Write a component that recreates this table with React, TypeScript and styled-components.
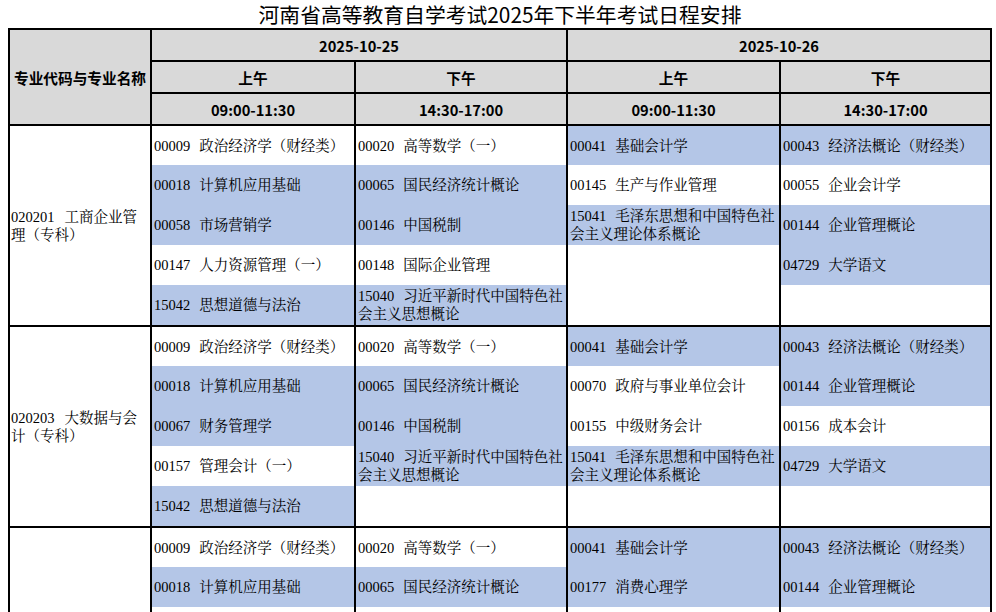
import styled, { createGlobalStyle } from "styled-components";

const GlobalStyle = createGlobalStyle`
  body {
    margin: 0;
    background: #ffffff;
  }
`;

const BLUE = "#b4c6e7";
const GRAY = "#d9d9d9";

type Exam = { code?: string; name?: string; blue: boolean };
type Block = { major: [string, string] | null; rows: Exam[][] };

const x = (code: string, name: string, blue = false): Exam => ({ code, name, blue });
const empty: Exam = { blue: false };

const blocks: Block[] = [
  {
    major: ["020201", "工商企业管理（专科）"],
    rows: [
      [x("00009", "政治经济学（财经类）"), x("00020", "高等数学（一）"), x("00041", "基础会计学", true), x("00043", "经济法概论（财经类）", true)],
      [x("00018", "计算机应用基础", true), x("00065", "国民经济统计概论", true), x("00145", "生产与作业管理"), x("00055", "企业会计学")],
      [x("00058", "市场营销学", true), x("00146", "中国税制", true), x("15041", "毛泽东思想和中国特色社会主义理论体系概论", true), x("00144", "企业管理概论", true)],
      [x("00147", "人力资源管理（一）"), x("00148", "国际企业管理"), empty, x("04729", "大学语文", true)],
      [x("15042", "思想道德与法治", true), x("15040", "习近平新时代中国特色社会主义思想概论", true), empty, empty],
    ],
  },
  {
    major: ["020203", "大数据与会计（专科）"],
    rows: [
      [x("00009", "政治经济学（财经类）"), x("00020", "高等数学（一）"), x("00041", "基础会计学", true), x("00043", "经济法概论（财经类）", true)],
      [x("00018", "计算机应用基础", true), x("00065", "国民经济统计概论", true), x("00070", "政府与事业单位会计"), x("00144", "企业管理概论", true)],
      [x("00067", "财务管理学", true), x("00146", "中国税制", true), x("00155", "中级财务会计"), x("00156", "成本会计")],
      [x("00157", "管理会计（一）"), x("15040", "习近平新时代中国特色社会主义思想概论", true), x("15041", "毛泽东思想和中国特色社会主义理论体系概论", true), x("04729", "大学语文", true)],
      [x("15042", "思想道德与法治", true), empty, empty, empty],
    ],
  },
  {
    major: null,
    rows: [
      [x("00009", "政治经济学（财经类）"), x("00020", "高等数学（一）"), x("00041", "基础会计学", true), x("00043", "经济法概论（财经类）", true)],
      [x("00018", "计算机应用基础", true), x("00065", "国民经济统计概论", true), x("00177", "消费心理学", true), x("00144", "企业管理概论", true)],
      [empty, empty, empty, empty],
      [empty, empty, empty, empty],
      [empty, empty, empty, empty],
    ],
  },
];

const Page = styled.div`
  padding: 0 4px 0 8px;
  font-family: "Liberation Serif", "Noto Serif CJK SC", "Noto Sans CJK SC", serif;
  color: #000000;
`;

const Title = styled.h1`
  margin: 0;
  width: 984px;
  height: 28px;
  text-align: center;
  font: 400 20.8px/29px "Noto Sans CJK SC", sans-serif;
  color: #000000;
`;

const Sheet = styled.table`
  width: 984px;
  border-collapse: collapse;
  table-layout: fixed;
`;

const HeadCell = styled.th`
  height: 30px;
  padding: 0;
  border: 2px solid #000000;
  background: ${GRAY};
  font: 700 14.67px "Noto Sans CJK SC", sans-serif;
  text-align: center;
  vertical-align: middle;
`;

const MajorCell = styled.td`
  padding: 0 1px;
  border: 2px solid #000000;
  background: #ffffff;
  text-align: left;
  vertical-align: middle;
`;

const MajorText = styled.span`
  display: block;
  max-width: 128px;
  font-size: 14.5px;
  line-height: 18px;
  word-break: break-all;
`;

const Cell = styled.td<{ $blue: boolean; $first: boolean }>`
  height: ${(p) => (p.$first ? 39 : 40)}px;
  padding: 0 2px;
  border-left: 2px solid #000000;
  border-right: 2px solid #000000;
  border-top: ${(p) => (p.$first ? "2px solid #000000" : "none")};
  border-bottom: none;
  background: ${(p) => (p.$blue ? BLUE : "#ffffff")};
  font-size: 14.5px;
  line-height: 18px;
  text-align: left;
  vertical-align: middle;
`;

const Code = styled.span<{ $gap?: number }>`
  margin-right: ${(p) => p.$gap ?? 9}px;
`;

const days = [
  { date: "2025-10-25" },
  { date: "2025-10-26" },
];
const halves = [
  { label: "上午", time: "09:00-11:30" },
  { label: "下午", time: "14:30-17:00" },
];

export default function App() {
  return (
    <Page>
      <GlobalStyle />
      <Title>河南省高等教育自学考试2025年下半年考试日程安排</Title>
      <Sheet>
        <colgroup>
          <col style={{ width: 142 }} />
          <col style={{ width: 204 }} />
          <col style={{ width: 212 }} />
          <col style={{ width: 213 }} />
          <col style={{ width: 211 }} />
        </colgroup>
        <thead>
          <tr>
            <HeadCell rowSpan={3}>专业代码与专业名称</HeadCell>
            {days.map((d) => (
              <HeadCell key={d.date} colSpan={2}>
                {d.date}
              </HeadCell>
            ))}
          </tr>
          <tr>
            {days.map((d) =>
              halves.map((h) => <HeadCell key={d.date + h.label}>{h.label}</HeadCell>)
            )}
          </tr>
          <tr>
            {days.map((d) =>
              halves.map((h) => <HeadCell key={d.date + h.time}>{h.time}</HeadCell>)
            )}
          </tr>
        </thead>
        <tbody>
          {blocks.map((block, bi) =>
            block.rows.map((row, ri) => (
              <tr key={`${bi}-${ri}`}>
                {ri === 0 && (
                  <MajorCell rowSpan={block.rows.length}>
                    {block.major && (
                      <MajorText>
                        <Code $gap={10}>{block.major[0]}</Code>
                        {block.major[1]}
                      </MajorText>
                    )}
                  </MajorCell>
                )}
                {row.map((exam, ci) => (
                  <Cell key={ci} $blue={exam.blue} $first={ri === 0}>
                    {exam.code && (
                      <>
                        <Code>{exam.code}</Code>
                        {exam.name}
                      </>
                    )}
                  </Cell>
                ))}
              </tr>
            ))
          )}
        </tbody>
      </Sheet>
    </Page>
  );
}
